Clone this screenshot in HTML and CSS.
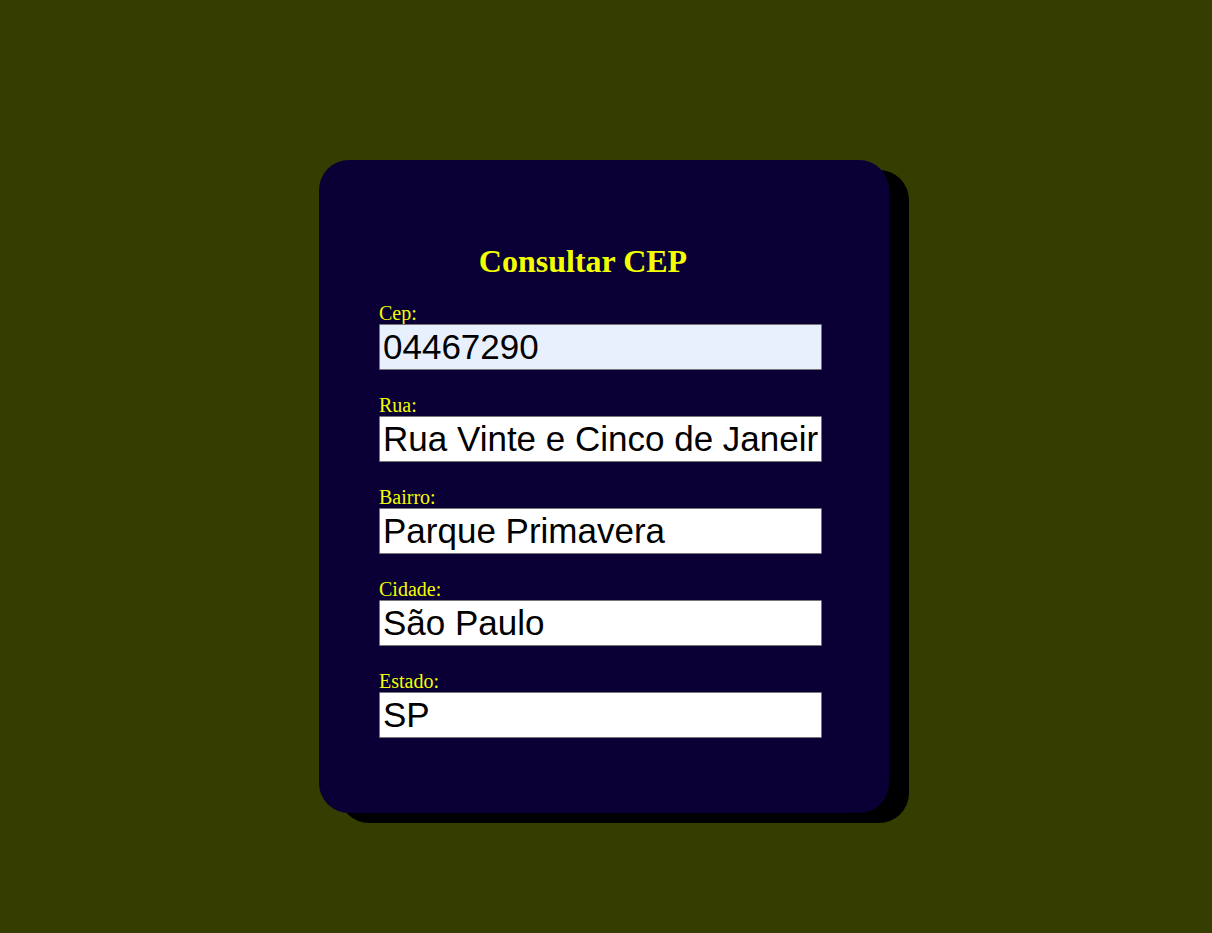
FILE: index.html
```html
<!DOCTYPE html>
<html lang="pt-BR">
<head>
<meta charset="utf-8">
<title>Consultar CEP</title>
<link rel="stylesheet" href="styles.css">
</head>
<body>
<form class="card">
<h1 class="title">Consultar CEP</h1>
<div class="field"><label for="cep">Cep:</label><input class="filled" id="cep" type="text" value="04467290"></div>
<div class="field"><label for="rua">Rua:</label><input id="rua" type="text" value="Rua Vinte e Cinco de Janeiro"></div>
<div class="field"><label for="bairro">Bairro:</label><input id="bairro" type="text" value="Parque Primavera"></div>
<div class="field"><label for="cidade">Cidade:</label><input id="cidade" type="text" value="São Paulo"></div>
<div class="field"><label for="estado">Estado:</label><input id="estado" type="text" value="SP"></div>
</form>
</body>
</html>
```

FILE: styles.css
```css
* { box-sizing: border-box; }
body {
  margin: 0;
  min-height: 100vh;
  display: flex;
  align-items: center;
  justify-content: center;
  padding: 40px 16px 0 12px;
  background: #353d00;
  color: #f2ff00;
  font-family: "Liberation Serif", "Times New Roman", serif;
}
.card {
  width: 100%;
  max-width: 570px;
  padding: 83px 67px 75px 60px;
  border-radius: 30px;
  background: #0a0036;
  box-shadow: 20px 10px 0 #000;
}
.title {
  margin: 0 35px 24px 0;
  font-size: 32px;
  line-height: 36px;
  text-align: center;
}
.field {
  display: flex;
  flex-direction: column;
  margin-bottom: 25px;
}
.field:last-child { margin-bottom: 0; }
.field label {
  font-size: 20px;
  line-height: 21px;
}
.field input {
  width: 100%;
  height: 46px;
  padding: 1px 3px;
  border: 1px solid #767676;
  border-radius: 1px;
  background: #fff;
  color: #000;
  font-family: "Liberation Sans", Arial, sans-serif;
  font-size: 35px;
}
.field .filled { background: #e8f0fe; }
```
